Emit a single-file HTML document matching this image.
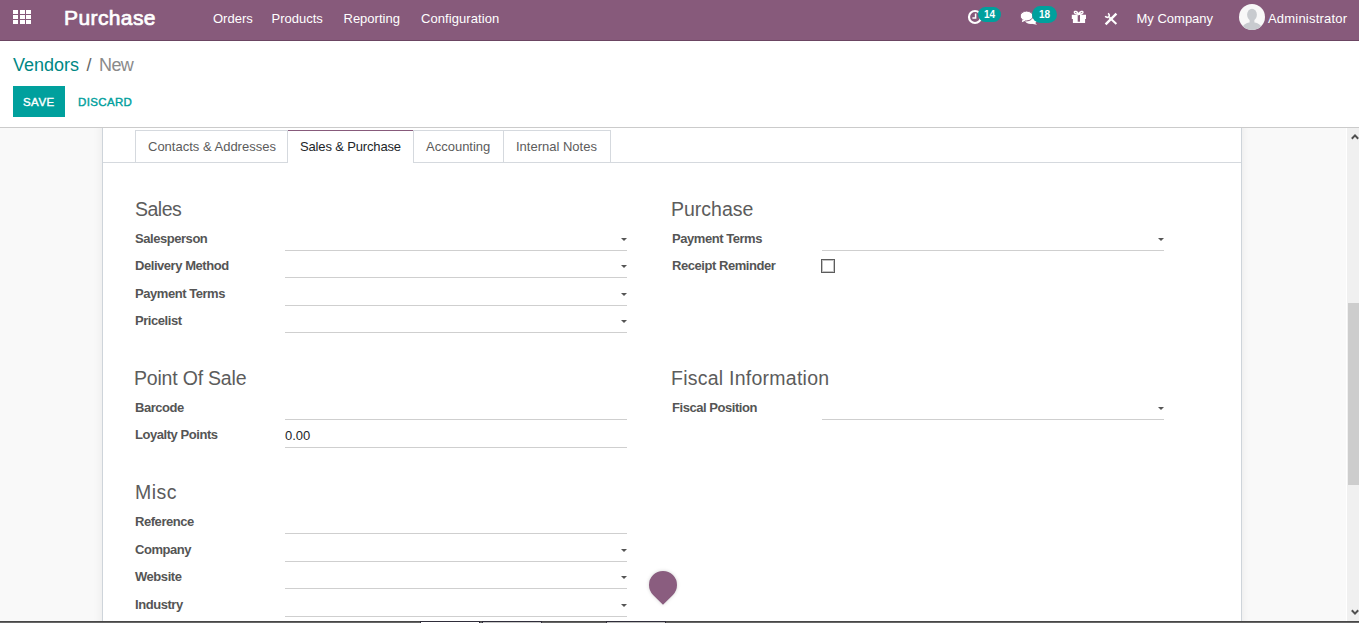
<!DOCTYPE html>
<html><head><meta charset="utf-8">
<style>
*{margin:0;padding:0;box-sizing:border-box}
html,body{width:1359px;height:623px;overflow:hidden;background:#fff;font-family:"Liberation Sans",sans-serif}
.a{position:absolute;white-space:nowrap}
#nav{position:absolute;left:0;top:0;width:1359px;height:41px;background:#875A7B;border-bottom:1px solid #6b4562}
.nt{position:absolute;color:#fff;font-size:13px;line-height:13px;white-space:nowrap}
.sq{position:absolute;width:5px;height:4px;background:#fff}
#cp{position:absolute;left:0;top:41px;width:1359px;height:87px;background:#fff;border-bottom:1px solid #cbcbcb}
#content{position:absolute;left:0;top:128px;width:1347px;height:493px;background:#f9f9f9;overflow:hidden}
.tt{position:absolute;font-size:13px;line-height:13px;color:#5c5c5c;white-space:nowrap}
.h{position:absolute;font-size:19.5px;line-height:20px;color:#5c5c5c;white-space:nowrap}
.lb{position:absolute;font-size:13px;line-height:13px;font-weight:bold;color:#555;letter-spacing:-0.45px;white-space:nowrap}
.ln{position:absolute;height:1px;background:#cfcfcf}
.ca{position:absolute;width:0;height:0;border-left:3px solid transparent;border-right:3px solid transparent;border-top:3px solid #555}
#in{position:absolute;left:0;top:-128px;width:1347px;height:623px}
#sheet{position:absolute;left:102px;top:100px;width:1140px;height:600px;background:#fff;border-left:1px solid #ced4da;border-right:1px solid #ced4da;box-shadow:0 0 10px rgba(0,0,0,.07)}
.tab{position:absolute;top:130px;height:32px;border:1px solid #d5d9de;border-bottom:none;background:#fff}
.tab.act{border:none;border-top:1px solid #875A7B;height:33px}
.cb{position:absolute;width:14px;height:14px;border:1px solid #5c5c5c;background:#fff;box-shadow:inset 0 0 0 1px #c4c4c4}
.tv{position:absolute;font-size:13px;line-height:13px;color:#212529;white-space:nowrap}
.badge{position:absolute;background:#00A09D;color:#fff;border-radius:9px;font-size:10px;font-weight:bold;text-align:center}
#sb{position:absolute;left:1346px;top:128px;width:13px;height:493px;background:#f0f0f0;border-left:1px solid #fff}
#bot{position:absolute;left:0;top:621px;width:1359px;height:2px;background:#666}
</style></head><body>

<div id="nav">
  <div class="sq" style="left:13px;top:10px"></div><div class="sq" style="left:19.5px;top:10px"></div><div class="sq" style="left:26px;top:10px"></div>
  <div class="sq" style="left:13px;top:15px"></div><div class="sq" style="left:19.5px;top:15px"></div><div class="sq" style="left:26px;top:15px"></div>
  <div class="sq" style="left:13px;top:20px"></div><div class="sq" style="left:19.5px;top:20px"></div><div class="sq" style="left:26px;top:20px"></div>
  <div class="nt" style="left:64px;top:7px;font-size:21px;line-height:21px;-webkit-text-stroke:0.7px #fff;letter-spacing:0.4px">Purchase</div>
  <div class="nt" style="left:213px;top:12px">Orders</div>
  <div class="nt" style="left:271.5px;top:12px">Products</div>
  <div class="nt" style="left:343.5px;top:12px">Reporting</div>
  <div class="nt" style="left:421px;top:12px;letter-spacing:0.08px">Configuration</div>
  
  <svg class="a" style="left:966px;top:8px" width="18" height="18" viewBox="0 0 18 18"><circle cx="9" cy="9" r="6" fill="none" stroke="#fff" stroke-width="2.2"/><path d="M9.6 5.5v4.4h-3.2" fill="none" stroke="#fff" stroke-width="1.5"/></svg>
  <div class="badge" style="left:978px;top:7px;width:23px;height:15px;line-height:16px">14</div>
  <svg class="a" style="left:1018px;top:8px" width="22" height="18" viewBox="0 0 22 18"><ellipse cx="13" cy="12.3" rx="6" ry="3.8" fill="#fff"/><path d="M16.5 14.2L19 16.8 13.5 15.8Z" fill="#fff"/><ellipse cx="8.6" cy="8" rx="6.4" ry="4.9" fill="#fff" stroke="#875A7B" stroke-width="1"/><path d="M4.6 11.3L3.8 14.2 8 12.6Z" fill="#fff"/></svg>
  <div class="badge" style="left:1032px;top:6px;width:25px;height:17px;line-height:18px">18</div>
  <svg class="a" style="left:1071px;top:10px" width="16" height="14" viewBox="0 0 16 14"><path d="M0.8 4.7h14.2v4.4h-14.2z M1.9 9.1h12.2v3.9h-12.2z" fill="#fff"/><path d="M6.7 5h2.3v6.7h-2.3z" fill="#875A7B"/><path d="M7.6 4.2C6.2 1.2 3.6 0.6 3.3 2.2 3.1 3.6 5.2 4.2 7.6 4.2 10 4.2 12.2 3.6 12 2.2 11.7 0.6 9.1 1.2 7.6 4.2Z" fill="none" stroke="#fff" stroke-width="1.4"/></svg>
  <svg class="a" style="left:1103px;top:11px" width="16" height="16" viewBox="0 0 16 16"><path d="M13.4 2.6L2.6 13.4" stroke="#fff" stroke-width="2.4"/><path d="M6.2 6.2L13.4 13" stroke="#fff" stroke-width="2"/><path d="M4.9 2.4A2 2 0 1 1 2.4 4.9" fill="none" stroke="#fff" stroke-width="1.6"/></svg>
  <svg class="a" style="left:1239px;top:4px" width="26" height="26" viewBox="0 0 26 26"><defs><clipPath id="cc"><circle cx="13" cy="13" r="13"/></clipPath></defs><circle cx="13" cy="13" r="13" fill="#f8f8f8"/><g clip-path="url(#cc)" fill="#c8cbcf"><ellipse cx="13" cy="10.8" rx="4.9" ry="6"/><path d="M10.6 14h4.8v5h-4.8z"/><path d="M2 27C3 21.5 6 19.4 10.5 18.5L15.5 18.5C20 19.4 23 21.5 24 27Z"/></g></svg>
  <div class="nt" style="left:1136.5px;top:12px">My Company</div>
  <div class="nt" style="left:1268px;top:12px;letter-spacing:0.2px">Administrator</div>
</div>

<div id="cp">
  <div class="a" style="left:13px;top:15px;font-size:18px;line-height:18px;color:#008784">Vendors</div><div class="a" style="left:86.5px;top:15px;font-size:18px;line-height:18px;color:#666">/</div><div class="a" style="left:99px;top:15px;font-size:18px;line-height:18px;color:#8a8a8a;letter-spacing:-0.6px">New</div>
  <div class="a" style="left:13px;top:45px;width:52px;height:31px;background:#00A09D"></div>
  <div class="a" style="left:23px;top:55px;font-size:11.5px;line-height:12px;color:#fff;-webkit-text-stroke:0.4px #fff;letter-spacing:0.45px">SAVE</div>
  <div class="a" style="left:78px;top:55px;font-size:11.5px;line-height:12px;color:#00A09D;-webkit-text-stroke:0.4px #00A09D;letter-spacing:0.35px">DISCARD</div>
</div>

<div id="content"><div id="in">
<div id="sheet"></div>
<div class="ln" style="left:103px;top:162px;width:1138px;background:#d5d9de"></div>
<div class="tab" style="left:135px;width:153px"></div>
<div class="tab act" style="left:288px;width:125px"></div>
<div class="tab" style="left:413px;width:91px"></div>
<div class="tab" style="left:503px;width:108px"></div>
<div class="tt" style="left:148px;top:140px">Contacts &amp; Addresses</div>
<div class="tt" style="left:300px;top:140px;color:#212529;letter-spacing:-0.15px">Sales &amp; Purchase</div>
<div class="tt" style="left:426px;top:140px">Accounting</div>
<div class="tt" style="left:516px;top:140px">Internal Notes</div>
<div class="h" style="left:135px;top:199px;letter-spacing:-0.5px">Sales</div>
<div class="lb" style="left:135px;top:232px">Salesperson</div>
<div class="ln" style="left:285px;top:250px;width:342px"></div>
<div class="ca" style="left:621px;top:238px"></div>
<div class="lb" style="left:135px;top:259px">Delivery Method</div>
<div class="ln" style="left:285px;top:277px;width:342px"></div>
<div class="ca" style="left:621px;top:265px"></div>
<div class="lb" style="left:135px;top:287px">Payment Terms</div>
<div class="ln" style="left:285px;top:305px;width:342px"></div>
<div class="ca" style="left:621px;top:293px"></div>
<div class="lb" style="left:135px;top:314px">Pricelist</div>
<div class="ln" style="left:285px;top:332px;width:342px"></div>
<div class="ca" style="left:621px;top:320px"></div>
<div class="h" style="left:671px;top:199px">Purchase</div>
<div class="lb" style="left:672px;top:232px">Payment Terms</div>
<div class="ln" style="left:822px;top:250px;width:342px"></div>
<div class="ca" style="left:1158px;top:238px"></div>
<div class="lb" style="left:672px;top:259px">Receipt Reminder</div>
<div class="cb" style="left:821px;top:259px"></div>
<div class="h" style="left:134px;top:368px;letter-spacing:-0.2px">Point Of Sale</div>
<div class="lb" style="left:135px;top:401px">Barcode</div>
<div class="ln" style="left:285px;top:419px;width:342px"></div>
<div class="lb" style="left:135px;top:428px">Loyalty Points</div>
<div class="ln" style="left:285px;top:447px;width:342px"></div>
<div class="tv" style="left:285px;top:429px">0.00</div>
<div class="h" style="left:671px;top:368px;letter-spacing:0.25px">Fiscal Information</div>
<div class="lb" style="left:672px;top:401px">Fiscal Position</div>
<div class="ln" style="left:822px;top:419px;width:342px"></div>
<div class="ca" style="left:1158px;top:407px"></div>
<div class="h" style="left:135px;top:482px;letter-spacing:0.5px">Misc</div>
<div class="lb" style="left:135px;top:515px">Reference</div>
<div class="ln" style="left:285px;top:533px;width:342px"></div>
<div class="lb" style="left:135px;top:543px">Company</div>
<div class="ln" style="left:285px;top:561px;width:342px"></div>
<div class="ca" style="left:621px;top:549px"></div>
<div class="lb" style="left:135px;top:570px">Website</div>
<div class="ln" style="left:285px;top:588px;width:342px"></div>
<div class="ca" style="left:621px;top:576px"></div>
<div class="lb" style="left:135px;top:598px">Industry</div>
<div class="ln" style="left:285px;top:616px;width:342px"></div>
<div class="ca" style="left:621px;top:604px"></div>
</div></div>
<div class="a" style="left:649px;top:571px;width:28px;height:28px;background:#8a5d7f;border-radius:50% 50% 0 50%;transform:rotate(45deg);box-shadow:0 0 4px rgba(0,0,0,.18)"></div>
<div id="sb"><div style="position:absolute;left:1px;top:175px;width:12px;height:182px;background:#cdcdcd"></div>
<svg style="position:absolute;left:4px;top:5px" width="8" height="7" viewBox="0 0 8 7"><path d="M0.8 5.8L4 2.4 7.2 5.8" fill="none" stroke="#505050" stroke-width="2"/></svg>
<svg style="position:absolute;left:4px;top:481px" width="8" height="7" viewBox="0 0 8 7"><path d="M0.8 1.2L4 4.6 7.2 1.2" fill="none" stroke="#505050" stroke-width="2"/></svg>
</div>
<div id="bot"><div style="position:absolute;left:0;top:0;width:1359px;height:1px;background:#474747"></div>
<div style="position:absolute;left:420px;top:0;width:60px;height:2px;background:#fff;border:1px solid #2f2d3a;border-bottom:none"></div>
<div style="position:absolute;left:482px;top:0;width:60px;height:2px;background:#c8c8c8;border:1px solid #2f2d3a;border-bottom:none"></div>
<div style="position:absolute;left:606px;top:0;width:60px;height:2px;background:#bdbdbd;border:1px solid #2f2d3a;border-bottom:none"></div>
</div>
</body></html>
